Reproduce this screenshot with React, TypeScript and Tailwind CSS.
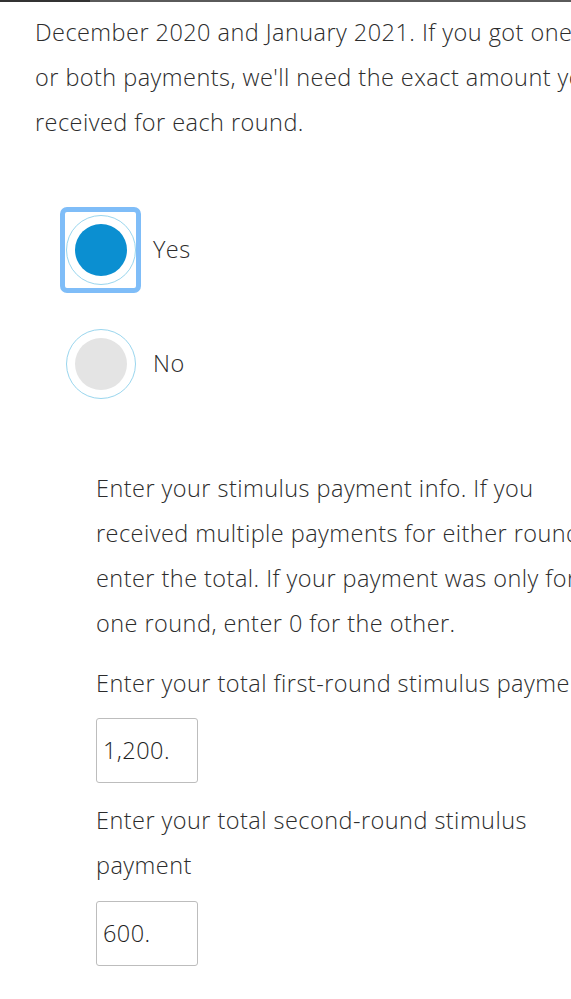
import React from "react";

const font = { fontFamily: "'Open Sans', 'Noto Sans', sans-serif" };

function Line({ children }: { children: React.ReactNode }) {
  return <div className="h-[45px] leading-[45px] whitespace-nowrap">{children}</div>;
}

export default function App() {
  return (
    <div
      className="relative w-[571px] h-[999px] overflow-hidden bg-white text-[23.5px] tracking-[0.45px] font-light text-[#2c2c2c]"
      style={font}
    >
      <div className="flex h-[2px]">
        <div className="w-[90px] bg-[#333333]" />
        <div className="flex-1 bg-[#5a5a5a]" />
      </div>
      <div className="pl-[35px] pt-[8px]">
        <Line>December 2020 and January 2021. If you got one</Line>
        <Line>or both payments, we'll need the exact amount you</Line>
        <Line>received for each round.</Line>
      </div>

      <div className="mt-[62px] pl-[60px]">
        <div className="flex items-center h-[86px]">
          <div className="w-[81px] h-[86px] rounded-[7px] border-[5px] border-[#7fbdf8] flex items-center justify-center">
            <div className="w-[70px] h-[70px] rounded-full border border-[#9ad6ee] flex items-center justify-center">
              <div className="w-[52px] h-[52px] rounded-full bg-[#0b8fd1]" />
            </div>
          </div>
          <span className="ml-[12px]">Yes</span>
        </div>
        <div className="flex items-center h-[86px] mt-[28px]">
          <div className="w-[81px] h-[86px] flex items-center justify-center">
            <div className="w-[70px] h-[70px] rounded-full border border-[#9ad6ee] flex items-center justify-center">
              <div className="w-[52px] h-[52px] rounded-full bg-[#e4e4e4]" />
            </div>
          </div>
          <span className="ml-[12px]">No</span>
        </div>
      </div>

      <div className="pl-[96px] mt-[59px]">
        <Line>Enter your stimulus payment info. If you</Line>
        <Line>received multiple payments for either round,</Line>
        <Line>enter the total. If your payment was only for</Line>
        <Line>one round, enter 0 for the other.</Line>
        <div className="mt-[15px]">
          <Line>Enter your total first-round stimulus payment</Line>
        </div>
        <div className="mt-[12px] w-[102px] h-[65px] border border-[#bdbdbd] rounded-[3px] flex items-center pl-[6px] text-[#1e1e1e]">
          1,200.
        </div>
        <div className="mt-[15px]">
          <Line>Enter your total second-round stimulus</Line>
          <Line>payment</Line>
        </div>
        <div className="mt-[13px] w-[102px] h-[65px] border border-[#bdbdbd] rounded-[3px] flex items-center pl-[6px] text-[#1e1e1e]">
          600.
        </div>
      </div>
    </div>
  );
}
